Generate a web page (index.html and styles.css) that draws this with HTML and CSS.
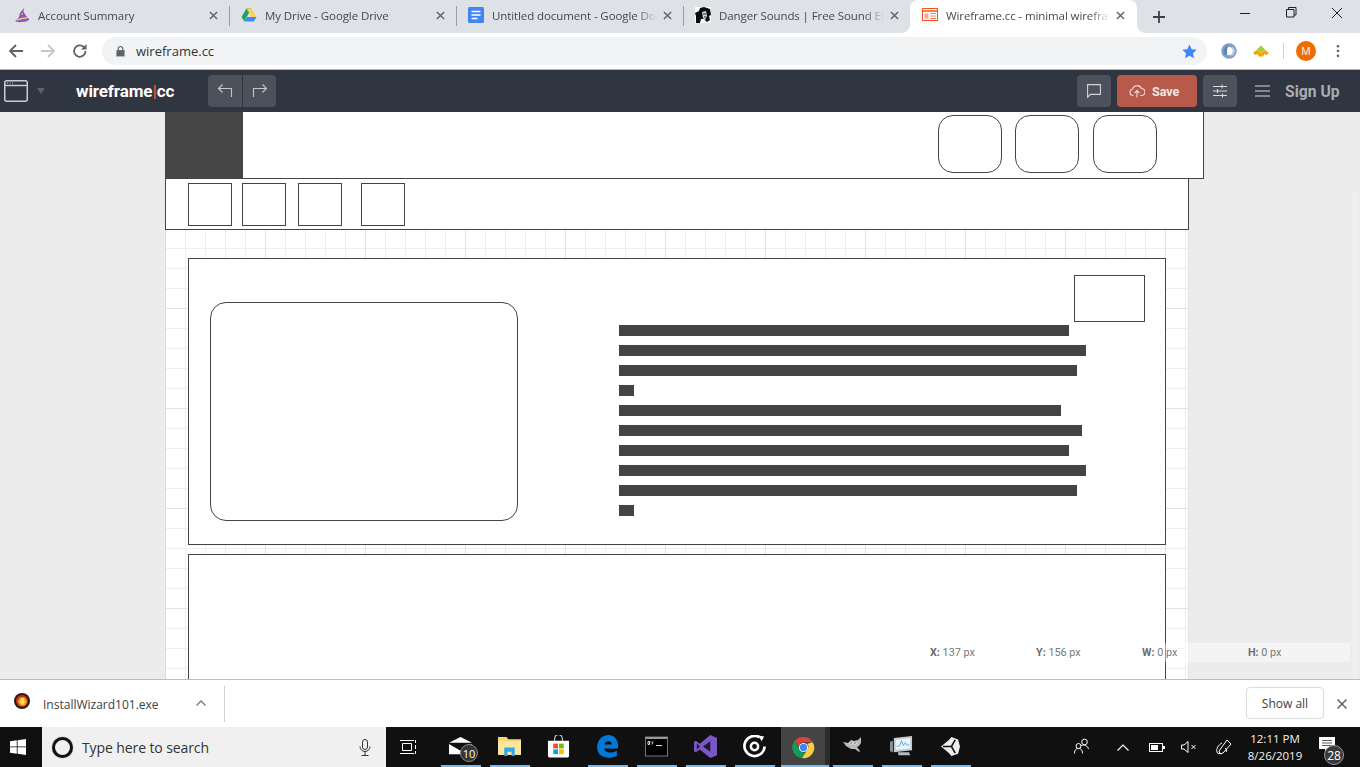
FILE: index.html
```html
<!DOCTYPE html>
<html lang="en">
<head>
<meta charset="utf-8">
<title>Wireframe.cc</title>
<link rel="stylesheet" href="styles.css">
</head>
<body>
<div class="tabstrip">
  <div class="tab tab-first sep">
    <svg class="fav" viewBox="0 0 16 16"><path d="M1 14 Q5 12 6 6 L10 1 L9.500 5 L12 8.500 Q13 11 15.500 12 Q14 15 8 15 Q3 15.500 1 14Z" fill="#8a5ab5"/><path d="M3 13 Q8 11 13 11" stroke="#e3c48a" stroke-width="1.500" fill="none"/><circle cx="8" cy="7" r=".8" fill="#f3d27a"/></svg>
    <span class="tab-title">Account Summary</span>
    <svg class="tab-x" viewBox="0 0 10 10"><path d="M1 1L9 9M9 1L1 9"/></svg>
  </div>
  <div class="tab sep">
    <svg class="fav" viewBox="0 0 16 16"><path d="M5.500 1.500h5L5.700 10 3.200 14.300 0.500 10z" fill="#1fa463"/><path d="M5.500 1.500h5l5 8.500h-5z" fill="#ffd04b"/><path d="M3.200 14.500l2.700-4.500h9.600l-2.700 4.500z" fill="#4587f4"/></svg>
    <span class="tab-title">My Drive - Google Drive</span>
    <svg class="tab-x" viewBox="0 0 10 10"><path d="M1 1L9 9M9 1L1 9"/></svg>
  </div>
  <div class="tab sep">
    <svg class="fav" viewBox="0 0 16 16"><rect width="16" height="16" rx="1.500" fill="#4285f4"/><path d="M3.500 4.500h9M3.500 8h9M3.500 11.500h6" stroke="#fff" stroke-width="1.600"/></svg>
    <span class="tab-title">Untitled document - Google Docs</span>
    <svg class="tab-x" viewBox="0 0 10 10"><path d="M1 1L9 9M9 1L1 9"/></svg>
  </div>
  <div class="tab">
    <svg class="fav" viewBox="0 0 16 16"><rect width="16" height="16" fill="#fff"/><path d="M1 16 L1 9 L0 6 L4 4 L5 1 L9 0 L15 2 L16 8 L14 9 L15 13 L12 15 L9 12 L6 12 L5 16Z" fill="#0c0c0c"/><path d="M7 5 L11 4 L12 9 L10 13 L8 11Z" fill="#d8d8d8"/><path d="M8 7h3M9 10h2" stroke="#222"/></svg>
    <span class="tab-title">Danger Sounds | Free Sound Effects</span>
    <svg class="tab-x" viewBox="0 0 10 10"><path d="M1 1L9 9M9 1L1 9"/></svg>
  </div>
  <div class="tab tab-active">
    <svg class="fav" viewBox="0 0 16 16"><rect x=".5" y="1.500" width="15" height="12" fill="#fff" stroke="#f4511e"/><path d="M.5 4h15" stroke="#f4511e" stroke-width="1.500"/><path d="M2.500 6.500h4v5h-4z" fill="#f9a58a"/><path d="M8 6.500h6M8 9h6M8 11.500h6" stroke="#f4815e"/></svg>
    <span class="tab-title">Wireframe.cc - minimal wireframing tool</span>
    <svg class="tab-x" viewBox="0 0 10 10"><path d="M1 1L9 9M9 1L1 9"/></svg>
  </div>
  <svg class="newtab" viewBox="0 0 12 12"><path d="M6 0V12M0 6H12"/></svg>
  <div class="winctl">
    <svg viewBox="0 0 46 14"><path d="M18 7.500H28" stroke="#222"/></svg>
    <svg viewBox="0 0 46 14"><path d="M18.500 3.500h7.500v7.500h-7.500z M20.500 3.500v-2h7.500v7.500h-2" fill="none" stroke="#222"/></svg>
    <svg viewBox="0 0 46 14"><path d="M18 2L28 12M28 2L18 12" stroke="#222"/></svg>
  </div>
</div>

<div class="toolbar">
  <svg class="nav-ic" viewBox="0 0 16 16"><path d="M15 8H2M8 2L2 8l6 6" fill="none" stroke="#5f6368" stroke-width="1.800"/></svg>
  <svg class="nav-ic" viewBox="0 0 16 16"><path d="M1 8H14M8 2l6 6-6 6" fill="none" stroke="#c4c6c9" stroke-width="1.800"/></svg>
  <svg class="nav-ic" viewBox="0 0 16 16"><path d="M13.500 8a5.700 5.700 0 1 1-1.700-4" fill="none" stroke="#5f6368" stroke-width="1.800"/><path d="M14.500 1v5.500H9z" fill="#5f6368"/></svg>
  <div class="omnibox">
    <svg class="lock" viewBox="0 0 10 12"><path d="M0.500 5h9v7h-9z" fill="#5f6368"/><path d="M2.500 5V3.500a2.500 2.500 0 0 1 5 0V5" fill="none" stroke="#5f6368" stroke-width="1.300"/></svg>
    <span class="url">wireframe.cc</span>
    <svg class="star" viewBox="0 0 16 16"><path d="M8 .5l2.300 5 5.400.6-4 3.700 1.100 5.400L8 12.500l-4.800 2.700 1.100-5.400-4-3.700 5.400-.6z" fill="#4285f4"/></svg>
  </div>
  <div class="extensions">
    <svg class="ext" viewBox="0 0 16 16"><circle cx="8" cy="8" r="6" fill="#fff" stroke="#7f9fc2" stroke-width="3.500"/><path d="M7.500 2.500A6 6 0 0 0 4 12l2.500-.5Q5 7 7.500 2.500Z" fill="#5f86ad"/><path d="M11 3.500Q13 10 9 13.500 13.500 13 14 8 14 5 11 3.500Z" fill="#b9cbe0"/></svg>
    <svg class="ext" viewBox="0 0 16 16"><path d="M8 2.500l4.500 4.500-4.500 3-4.500-3z" fill="#a8cc3c"/><path d="M3.500 7L8 10l4.500-3L16 10l-2.500 2-2-1-1.500 2.500H6L4.500 11l-2 1L0 10z" fill="#f7a400"/></svg>
    <span class="ext-sep"></span>
    <span class="avatar">M</span>
    <svg class="dots" viewBox="0 0 4 16"><circle cx="2" cy="2.500" r="1.500"/><circle cx="2" cy="8" r="1.500"/><circle cx="2" cy="13.500" r="1.500"/></svg>
  </div>
</div>

<header class="appbar">
  <svg class="pages" viewBox="0 0 24 22"><rect x=".75" y=".75" width="22.500" height="20.500" rx="2" fill="none" stroke="#c9cdd3" stroke-width="1.500"/><path d="M1 5.500H23" stroke="#c9cdd3" stroke-width="1.500"/><path d="M3 3h1M5.500 3h1M8 3h1" stroke="#c9cdd3"/></svg>
  <span class="caret"></span>
  <span class="logo">wireframe<span class="logo-bar">|</span>cc</span>
  <div class="btngroup">
    <span class="btn undo"><svg viewBox="0 0 16 14"><path d="M14.500 13V4.500H1.500M5.500.5l-4 4 4 4" fill="none" stroke="#c4c7cc" stroke-width="1.100"/></svg></span>
    <span class="btn redo"><svg viewBox="0 0 16 14"><path d="M1.500 13V4.500h13M10.500.5l4 4-4 4" fill="none" stroke="#c4c7cc" stroke-width="1.100"/></svg></span>
  </div>
  <div class="appbar-right">
    <span class="btn single"><svg viewBox="0 0 14 14"><path d="M.6.6h12.800v9.800H3.500L.6 13.200z" fill="none" stroke="#d3d5d9" stroke-width="1.100"/></svg></span>
    <span class="save"><svg viewBox="0 0 16 14"><path d="M4.500 11.500H3.800a3.200 3.200 0 0 1-.3-6.300A4.800 4.800 0 0 1 12.500 4.500a3.500 3.500 0 0 1-.2 7h-1" fill="none" stroke="#f0dcd8" stroke-width="1.100"/><path d="M8 13.500V6.500M5.500 9L8 6.500 10.500 9" fill="none" stroke="#f0dcd8" stroke-width="1.100"/></svg>Save</span>
    <span class="btn single"><svg viewBox="0 0 14 14"><path d="M0 2.500h14M0 7h14M0 11.500h14M9 .5v4M4.500 5v4M9.500 9.500v4" fill="none" stroke="#d8dade" stroke-width="1.100"/></svg></span>
    <svg class="burger" viewBox="0 0 15 12"><path d="M0 1h15M0 6h15M0 11h15" stroke="#d8dade" stroke-width="1.200"/></svg>
    <span class="signup">Sign Up</span>
  </div>
</header>

<main class="workspace">
  <div class="sheet">
    <div class="shape hdr"></div>
    <div class="shape logo-block"></div>
    <div class="shape circ circ1"></div>
    <div class="shape circ circ2"></div>
    <div class="shape circ circ3"></div>
    <div class="shape navbox"></div>
    <div class="shape sq sq1"></div>
    <div class="shape sq sq2"></div>
    <div class="shape sq sq3"></div>
    <div class="shape sq sq4"></div>
    <div class="shape card1"></div>
    <div class="shape picture"></div>
    <div class="shape tag"></div>
    <div class="shape textblock">
      <i class="w450"></i><i class="w467"></i><i class="w458"></i><i class="w15"></i><i class="w442"></i><i class="w463"></i><i class="w450"></i><i class="w467"></i><i class="w458"></i><i class="w15"></i>
    </div>
    <div class="shape card2"></div>
  </div>
  <div class="scrollthumb"></div>
  <div class="coords">
    <span><b>X:</b> 137 px</span>
    <span><b>Y:</b> 156 px</span>
    <span><b>W:</b> 0 px</span>
    <span><b>H:</b> 0 px</span>
  </div>
</main>

<div class="downloads">
  <svg class="dl-ic" viewBox="0 0 16 16"><circle cx="8" cy="8" r="8" fill="#2a1a14"/><circle cx="8" cy="8" r="6" fill="#c8321c"/><circle cx="8.500" cy="8.500" r="4.300" fill="#f5a623"/><path d="M5.500 8h6L8.500 12.500z" fill="#ffe14a"/><path d="M7 5h3v4H7z" fill="#ffe14a"/></svg>
  <span class="dl-name">InstallWizard101.exe</span>
  <svg class="dl-caret" viewBox="0 0 10 6"><path d="M.5 5.500L5 1l4.500 4.500" fill="none" stroke="#80868b" stroke-width="1.500"/></svg>
  <span class="dl-sep"></span>
  <span class="showall">Show all</span>
  <svg class="dl-x" viewBox="0 0 10 10"><path d="M.5.5l9 9M9.500.5l-9 9" stroke="#5f6368" stroke-width="1.500"/></svg>
</div>

<footer class="taskbar">
  <svg class="winlogo" viewBox="0 0 16 16"><path d="M0 2.300l6.800-1v6.200H0zM7.600 1.200L16 0v7.500H7.600zM0 8.300h6.800v6.400l-6.800-1zM7.600 8.300H16V16l-8.400-1.200z" fill="#fff"/></svg>
  <div class="search">
    <span class="cortana"></span>
    <span class="search-text">Type here to search</span>
    <svg class="mic" viewBox="0 0 12 17"><rect x="3.500" y=".5" width="5" height="10" rx="2.500" fill="none" stroke="#333"/><path d="M1 7.500a5 5 0 0 0 10 0M6 12.500v3.500M2.500 16.500h7" fill="none" stroke="#333"/></svg>
  </div>
  <div class="slot-task"><svg viewBox="0 0 17 15"><path d="M2.500 3.500h9v7h-9zM0 0.500h14M0 13.500h14M15.500 0v3M15.500 5v4M15.500 11v3" fill="none" stroke="#fff"/></svg></div>
  <div class="slot on"><svg viewBox="0 0 24 20"><path d="M0 6L12 0l12 6z M0 7.500l12 7 12-7V18H0z" fill="#fff"/></svg><span class="mailbadge">10</span></div>
  <div class="slot on"><svg viewBox="0 0 22 20"><path d="M0 1h8l2 2h12v15H0z" fill="#f6d776"/><path d="M0 5h22v13H0z" fill="#fae7a0"/><path d="M6 11h10v8h-3v-4H9v4H6z" fill="#2ea8e6"/></svg></div>
  <div class="slot"><svg viewBox="0 0 24 24"><path d="M1 6h22v16a1.500 1.500 0 0 1-1.500 1.500h-19A1.500 1.500 0 0 1 1 22z" fill="#fff"/><path d="M8 6V3.500a4 4 0 0 1 8 0V6" fill="none" stroke="#fff"/><path d="M6.500 9h5v5h-5z" fill="#f25022"/><path d="M12.500 9h5v5h-5z" fill="#7fba00"/><path d="M6.500 15h5v5h-5z" fill="#00a4ef"/><path d="M12.500 15h5v5h-5z" fill="#ffb900"/></svg></div>
  <div class="slot on"><svg viewBox="0 0 22 22"><path d="M1 12C1 5 6 0 12 0c6 0 10 5 9 13H8c.3 4 6 5 12 2v5c-8 4-19 1-19-8zM8 9h7c0-4-6-4-7 0z" fill="#0078d7"/></svg></div>
  <div class="slot on"><svg viewBox="0 0 23 20"><rect x=".5" y=".5" width="22" height="19" fill="#000" stroke="#777"/><path d="M.5 .5h22v2h-22z" fill="#999"/><path d="M3 5h1.500v3H3zM5.500 5.500h1M8 5l-1 3M11 9h6" stroke="#ddd" fill="none"/></svg></div>
  <div class="slot on"><svg viewBox="0 0 24 24"><path d="M17 0l7 3v18l-7 3-11-9-4 3-2-1V7l2-1 4 3z" fill="#7a57c4"/><path d="M17 6.500v11L9.500 12zM3 9v6l3-3z" fill="#1f1535"/></svg></div>
  <div class="slot on"><svg viewBox="0 0 24 24"><path d="M17.500 2.500A10.500 10.500 0 1 0 22.500 12" fill="none" stroke="#fff" stroke-width="2.800"/><circle cx="12" cy="12" r="3.800" fill="none" stroke="#fff" stroke-width="2.600"/><path d="M16 .5l6 1-2.500 5z" fill="#fff"/></svg></div>
  <div class="slot active"><svg viewBox="0 0 24 24"><path d="M12 1a11 11 0 0 1 9.600 5.500H12a5.500 5.500 0 0 0-5.300 4L2.800 5A11 11 0 0 1 12 1z" fill="#db4437"/><path d="M2.800 5l4.700 8a5.500 5.500 0 0 0 6.200 4.200L10.500 23A11 11 0 0 1 2.800 5z" fill="#0f9d58"/><path d="M21.600 6.500A11 11 0 0 1 10.500 23l5-8A5.500 5.500 0 0 0 16 8z" fill="#ffcd40"/><circle cx="12" cy="12" r="4.800" fill="#fff"/><circle cx="12" cy="12" r="3.800" fill="#4285f4"/></svg></div>
  <span class="slot-gap"></span>
  <div class="slot on"><svg class="ic-gimp" viewBox="0 0 20 16"><path d="M0 5l5 1 3-3 3 1 4-1 3-3 0 6-2 3-2 1 3 4-1 1-4-3-4 0-5-3z" fill="#b9b9b9"/><circle cx="8" cy="6" r="1.600" fill="#eee"/><circle cx="12" cy="6" r="1.600" fill="#eee"/><circle cx="8" cy="6" r=".7" fill="#111"/><circle cx="12" cy="6" r=".7" fill="#111"/></svg></div>
  <div class="slot on"><svg viewBox="0 0 24 22"><path d="M4 2l19-2v15L4 17z" fill="#c5ccd0"/><path d="M6 4l15-1.500v10.500L6 14.500z" fill="#eaf4fa"/><path d="M7 11l3-1 2-5 2 5 2-3 2 3 2-1" fill="none" stroke="#5ba4d8"/><path d="M0 6l3-1v12l-3-1z" fill="#8c9499"/><path d="M8 17h12l1 3H9z" fill="#b5bcc0"/></svg></div>
  <div class="slot on"><svg class="ic-unity" viewBox="0 0 20 20"><path d="M11 0l7 2.500 2 7.500-2 7.500-7 2.500-3-3.500-8-6.500 8-6.500z" fill="#ededed"/><path d="M2 10h9l4-7M11 10l4 7" fill="none" stroke="#101010" stroke-width="1.600"/></svg></div>
  <div class="tray">
    <svg class="t-people" viewBox="0 0 16 16"><circle cx="10.500" cy="4" r="2.800" fill="none" stroke="#fff"/><path d="M5.500 13c0-5 2-6 4-6 1 0 4 .5 5 4" fill="none" stroke="#fff"/><circle cx="4.500" cy="8" r="2.500" fill="#101010" stroke="#fff"/><path d="M.5 15.500c0-4 2-5 4-5s4 1 4 5" fill="#101010" stroke="#fff"/></svg>
    <svg class="t-chev" viewBox="0 0 12 7"><path d="M.5 6.500L6 1l5.500 5.500" fill="none" stroke="#fff" stroke-width="1.100"/></svg>
    <svg class="t-bat" viewBox="0 0 16 9"><rect x=".5" y=".5" width="13" height="8" fill="none" stroke="#fff"/><rect x="2" y="2" width="7" height="5" fill="#fff"/><path d="M14 3h2v3h-2z" fill="#fff"/></svg>
    <svg class="t-vol" viewBox="0 0 16 12"><path d="M.5 4h2.500L7 .5v11L3 8H.5z" fill="none" stroke="#fff"/><path d="M10.500 4l4 4M14.500 4l-4 4" stroke="#fff"/></svg>
    <svg class="t-pen" viewBox="0 0 16 16"><path d="M11 1l4 4-8 9-3 1-1-3zM6 4c-4 2-6 6-5 9 .5 2 3 2 4 1M9 9c2 1 2 3 1 4" fill="none" stroke="#fff"/></svg>
    <div class="clock"><span>12:11 PM</span><span>8/26/2019</span></div>
    <div class="notif"><svg viewBox="0 0 16 15"><path d="M0 0h16v12H8l-2 3v-3H0z" fill="#fff"/><path d="M3 3.500h10M3 6h10M3 8.500h10" stroke="#333" stroke-width=".8"/></svg><span class="notif-badge">28</span></div>
  </div>
</footer>
</body>
</html>
```

FILE: styles.css
```css
* { box-sizing: border-box; }
html, body { margin: 0; padding: 0; height: 767px; overflow: hidden; }
body { width: 1360px; display: flex; flex-direction: column; font-family: "Open Sans", "Noto Sans", sans-serif; background: #fff; }
svg { display: block; flex: none; }

/* tab strip */
.tabstrip { height: 33px; flex: none; background: #dee1e6; display: flex; align-items: stretch; }
.tab { width: 227px; height: 33px; padding: 0 3px 3px 11px; display: flex; align-items: center; position: relative; flex: none; }
.tab-first { width: 230px; padding-left: 14px; }
.tab.sep::after { content: ""; position: absolute; right: 0; top: 6px; height: 20px; width: 1px; background: #9a9da2; }
.fav { width: 16px; height: 16px; margin-right: 8px; }
.tab-title { flex: 1; min-width: 0; white-space: nowrap; overflow: hidden; font-size: 11.500px; letter-spacing: -.1px; color: #45494f;
  -webkit-mask-image: linear-gradient(to right, #000 calc(100% - 20px), transparent 100%); mask-image: linear-gradient(to right, #000 calc(100% - 20px), transparent 100%); }
.tab-x { width: 9px; height: 9px; margin: 0 9px 0 6px; fill: none; stroke: #5f6368; stroke-width: 1.600; }
.tab-active { background: #fff; border-radius: 8px 8px 0 0; margin-left: -1px; padding-left: 12px; }
.tab-active::before, .tab-active::after { content: ""; position: absolute; bottom: 0; width: 8px; height: 8px; }
.tab-active::before { left: -8px; background: radial-gradient(circle at 0 0, transparent 7.500px, #fff 8px); }
.tab-active::after { right: -8px; background: radial-gradient(circle at 100% 0, transparent 7.500px, #fff 8px); }
.newtab { width: 12px; height: 12px; margin: 1px 0 0 16px; align-self: center; fill: none; stroke: #3c4043; stroke-width: 1.800; }
.winctl { margin-left: auto; display: flex; padding-top: 6px; height: 26px; }
.winctl svg { width: 46px; height: 14px; }

/* toolbar */
.toolbar { height: 37px; flex: none; background: #fff; border-bottom: 1px solid #b4b6b9; display: flex; align-items: center; padding: 0 0 0 8px; }
.nav-ic { width: 16px; height: 16px; margin-right: 16px; }
.omnibox { width: 1105px; height: 28px; margin-left: -2px; border-radius: 14px; background: #f1f3f4; display: flex; align-items: center; padding: 0 10px 0 14px; }
.lock { width: 9px; height: 12px; margin-right: 11px; }
.url { font-size: 13px; color: #303338; }
.star { width: 15px; height: 15px; margin-left: auto; }
.extensions { display: flex; align-items: center; flex: 1; padding-left: 14px; }
.ext { width: 16px; height: 16px; margin-right: 16px; }
.ext-sep { width: 1px; height: 16px; background: #cfd1d4; margin-right: 12px; margin-left: -2px; }
.avatar { width: 20px; height: 20px; border-radius: 50%; background: #ef6c00; color: #fff; font-size: 10.500px; display: flex; align-items: center; justify-content: center; margin-right: 20px; }
.dots { width: 4px; height: 14px; fill: #5f6368; }

/* wireframe.cc bar */
.appbar { height: 42px; flex: none; background: #2f3541; display: flex; align-items: center; position: relative; z-index: 2; padding-left: 4px; }
.pages { width: 24px; height: 22px; }
.caret { width: 0; height: 0; border: 4px solid transparent; border-top: 6px solid #5a5f69; border-bottom: 0; margin-left: 9px; }
.logo { font-family: Roboto, sans-serif; font-weight: 700; font-size: 17px; color: #fff; margin-left: 31px; width: 132px; letter-spacing: -.1px; white-space: nowrap; }
.logo-bar { color: #e8523a; font-weight: 900; margin: 0; }
.btngroup { display: flex; height: 32px; background: #4c515b; border-radius: 4px; width: 68px; }
.btn { display: flex; align-items: center; justify-content: center; height: 32px; }
.btn svg { width: 14px; height: 14px; }
.undo { width: 35px; border-right: 1px solid #2f3541; }
.undo svg, .redo svg { width: 16px; }
.redo { width: 33px; }
.appbar-right { margin-left: auto; display: flex; align-items: center; padding-right: 20px; }
.single { width: 34px; background: #4c515b; border-radius: 4px; }
.save { width: 80px; height: 32px; margin: 0 6px; background: #b85a4b; border-radius: 4px; color: #f4e6e3; font: 700 12.500px Roboto, sans-serif; display: flex; align-items: center; padding-left: 12px; gap: 7px; }
.save svg { width: 16px; height: 14px; }
.burger { width: 15px; height: 12px; margin: 0 15px 0 18px; }
.signup { font: 700 15.700px Roboto, sans-serif; color: #a9adb4; width: 55px; white-space: nowrap; margin-top: 1px; }

/* canvas */
.workspace { height: 567px; flex: none; background: #ececec; position: relative; overflow: hidden; }
.sheet { position: relative; margin-left: 165px; width: 1024px; height: 567px; border-left: 1px solid #dcdcdc; border-right: 1px solid #e4e4e4; background-color: #fff;
  background-image: linear-gradient(to right, #e2e2e2 1px, transparent 1px), linear-gradient(to bottom, #e2e2e2 1px, transparent 1px), linear-gradient(to right, #eee 1px, transparent 1px), linear-gradient(to bottom, #eee 1px, transparent 1px);
  background-size: 100px 100px, 100px 100px, 20px 20px, 20px 20px;
  background-position: 99px 96px, 99px 96px, 19px 16px, 19px 16px; }
.shape { position: absolute; border: 1px solid #444; background: #fff; }
.hdr { left: -1px; top: 0; width: 1039px; height: 67px; border-top: 0; }
.logo-block { left: -1px; top: 0; width: 78px; height: 66px; background: #464646; border: 0; }
.circ { top: 3px; width: 64px; height: 58px; border-radius: 15px; }
.circ1 { left: 772px; }
.circ2 { left: 849px; }
.circ3 { left: 927px; }
.navbox { left: -1px; top: 66px; width: 1024px; height: 52px; }
.sq { top: 71px; width: 44px; height: 43px; }
.sq1 { left: 22px; }
.sq2 { left: 76px; }
.sq3 { left: 132px; }
.sq4 { left: 195px; }
.card1 { left: 22px; top: 146px; width: 978px; height: 287px; }
.picture { left: 44px; top: 190px; width: 308px; height: 219px; border-radius: 16px; }
.tag { left: 908px; top: 163px; width: 71px; height: 47px; }
.textblock { left: 453px; top: 213px; width: 470px; border: 0; background: none; display: flex; flex-direction: column; gap: 9px; }
.textblock i { display: block; height: 11px; background: #444; }
.w450 { width: 450px; }
.w467 { width: 467px; }
.w458 { width: 458px; }
.w15 { width: 15px; }
.w442 { width: 442px; }
.w463 { width: 463px; }
.card2 { left: 22px; top: 442px; width: 978px; height: 160px; }
.scrollthumb { position: absolute; left: 1352px; top: 81px; width: 6px; height: 486px; background: #f0f0f0; }
.coords { position: absolute; left: 920px; top: 531px; width: 430px; height: 19px; background: rgba(255,255,255,.45); display: flex; align-items: center; padding-left: 10px; font: 400 10.800px Roboto, sans-serif; color: #777; }
.coords span { width: 106px; flex: none; }
.coords b { font-weight: 700; color: #6c6c6c; }

/* download bar */
.downloads { height: 48px; flex: none; background: #fff; border-top: 1px solid #bdbdbd; display: flex; align-items: center; padding-left: 14px; position: relative; }
.dl-ic { width: 16px; height: 16px; margin-top: -5px; }
.dl-name { font-size: 12px; color: #3c4043; margin: 2px 0 0 13px; width: 153px; white-space: nowrap; }
.dl-caret { width: 10px; height: 6px; margin-top: -1px; }
.dl-sep { width: 1px; height: 36px; background: #d0d0d0; margin-left: 18px; }
.showall { margin-left: auto; width: 78px; height: 32px; border: 1px solid #dadce0; border-radius: 4px; display: flex; align-items: center; justify-content: center; font-size: 12px; color: #3c4043; margin-top: -1px; }
.dl-x { width: 10px; height: 10px; margin: 0 13px 0 13px; }

/* taskbar */
.taskbar { height: 40px; flex: 1; background: #101010; display: flex; align-items: stretch; position: relative; }
.winlogo { width: 16px; height: 16px; margin: 12px 16px 0 10px; }
.search { width: 344px; background: #f0f0f0; display: flex; align-items: center; padding-left: 10px; }
.cortana { width: 21px; height: 21px; border: 3px solid #111; border-radius: 50%; box-shadow: 0 0 1px #333; }
.search-text { font-size: 14px; color: #333; margin-left: 9px; letter-spacing: -.1px; }
.mic { width: 12px; height: 17px; margin-left: auto; margin-right: 15px; }
.slot-task { width: 50px; display: flex; align-items: center; justify-content: center; padding-right: 5px; }
.slot-task svg { width: 17px; height: 15px; }
.slot { width: 49px; flex: none; display: flex; align-items: center; justify-content: center; position: relative; padding-bottom: 2px; }
.slot svg { width: 23px; height: 23px; }
.slot svg.ic-gimp { width: 20px; height: 16px; margin-bottom: 3px; }
.slot svg.ic-unity { width: 19px; height: 19px; }
.slot.on::after { content: ""; position: absolute; left: 4.500px; right: 4.500px; bottom: 0; height: 2px; background: #76b9ed; }
.active { width: 44px; margin-left: 2px; background: #444; padding-bottom: 0; }
.active::after { content: ""; position: absolute; left: 0; right: -4px; bottom: 0; height: 2px; background: #76b9ed; }
.slot-gap { width: 5px; flex: none; background: #2c2c2c; margin-right: -2px; }
.mailbadge { position: absolute; left: 24px; top: 17px; width: 18px; height: 18px; border-radius: 50%; background: #333; border: 1px solid #888; color: #fff; font-size: 11px; display: flex; align-items: center; justify-content: center; }
.tray { flex: 1; position: relative; display: flex; align-items: center; padding-left: 99px; }
.t-people { width: 16px; height: 16px; margin: -2px 27px 0 0; }
.t-chev { width: 12px; height: 7px; margin-right: 20px; }
.t-bat { width: 16px; height: 9px; margin-right: 16px; }
.t-vol { width: 16px; height: 12px; margin-right: 19px; }
.t-pen { width: 16px; height: 16px; margin-right: 17px; }
.clock { display: flex; flex-direction: column; align-items: center; width: 52px; font-size: 11.500px; line-height: 17px; color: #f2f2f2; white-space: nowrap; }
.notif { position: relative; margin-left: 18px; }
.notif svg { width: 16px; height: 15px; margin-top: -5px; }
.notif-badge { position: absolute; left: 5px; top: 3px; width: 20px; height: 20px; border-radius: 50%; background: #3a3a3a; border: 1px solid #999; color: #fff; font-size: 12px; display: flex; align-items: center; justify-content: center; }
```
